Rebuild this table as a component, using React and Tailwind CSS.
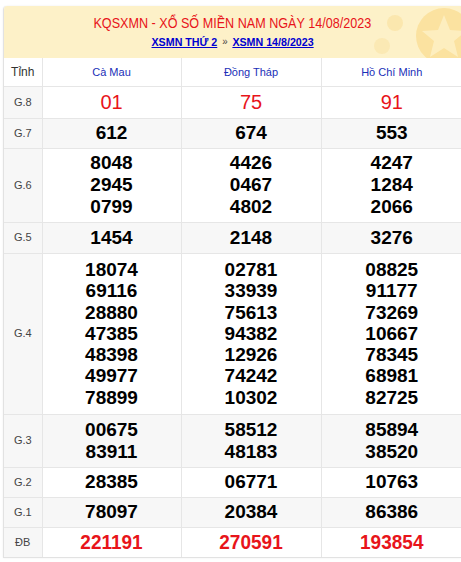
import React from "react";

const rows = [
  { label: "G.8", h: "h-[32px]", bg: "bg-white", red: "small", vals: [["01"], ["75"], ["91"]] },
  { label: "G.7", h: "h-[30px]", bg: "bg-[#f7f7f7]", vals: [["612"], ["674"], ["553"]] },
  { label: "G.6", h: "h-[74px]", bg: "bg-white", vals: [["8048", "2945", "0799"], ["4426", "0467", "4802"], ["4247", "1284", "2066"]] },
  { label: "G.5", h: "h-[31px]", bg: "bg-[#f7f7f7]", vals: [["1454"], ["2148"], ["3276"]] },
  {
    label: "G.4",
    h: "h-[161px]",
    bg: "bg-white",
    tight: true,
    vals: [
      ["18074", "69116", "28880", "47385", "48398", "49977", "78899"],
      ["02781", "33939", "75613", "94382", "12926", "74242", "10302"],
      ["08825", "91177", "73269", "10667", "78345", "68981", "82725"],
    ],
  },
  { label: "G.3", h: "h-[53px]", bg: "bg-[#f7f7f7]", vals: [["00675", "83911"], ["58512", "48183"], ["85894", "38520"]] },
  { label: "G.2", h: "h-[30px]", bg: "bg-white", vals: [["28385"], ["06771"], ["10763"]] },
  { label: "G.1", h: "h-[30px]", bg: "bg-[#f7f7f7]", vals: [["78097"], ["20384"], ["86386"]] },
  { label: "ĐB", h: "h-[30px]", bg: "bg-white", red: "big", vals: [["221191"], ["270591"], ["193854"]] },
];

function Cell({ lines, row }) {
  let cls = "text-[19px] font-bold text-black leading-[22px]";
  if (row.red === "small") cls = "text-[20px] font-normal text-[#e8141a] leading-[24px]";
  if (row.red === "big") cls = "text-[19px] font-bold text-[#e8141a] leading-[24px] scale-y-110";
  if (row.tight) cls = "text-[19px] font-bold text-black leading-[21.3px]";
  return (
    <td className="border-l border-[#e6e6e6] text-center align-middle">
      {lines.map((l) => (
        <div key={l} className={cls}>
          {l}
        </div>
      ))}
    </td>
  );
}

export default function App() {
  return (
    <div className="bg-white w-[461px] h-[562px] pl-[3px] pt-[6px] font-['Liberation_Sans',Arial,sans-serif] overflow-hidden">
      <div className="w-[458px] border-l border-b border-[#e2e2e2] rounded-tl-[4px] overflow-hidden shadow-[0_0_2px_rgba(0,0,0,0.08)]">
        <div className="relative h-[52px] bg-[#fdf1c8] overflow-hidden flex flex-col items-center">
          <svg className="absolute right-[-14px] top-[-4px]" width="110" height="64" viewBox="0 0 110 64">
            <circle cx="30" cy="21" r="8" fill="#fbe7ae" />
            <circle cx="17" cy="44" r="8" fill="#fbe9b4" />
            <circle cx="79" cy="34" r="28" fill="#fbe2a0" />
            <polygon
              points="79,13 85,28 101,29 89,39 93,55 79,46 65,55 69,39 57,29 73,28"
              fill="#fdeebf"
            />
          </svg>
          <div className="relative text-[#e8141a] text-[14px] leading-[18px] mt-[8px] whitespace-nowrap scale-x-90 scale-y-105">
            KQSXMN - XỔ SỐ MIỀN NAM NGÀY 14/08/2023
          </div>
          <div className="relative mt-[3px] text-[11px] font-bold leading-[14px] flex items-center gap-[5px] scale-x-[0.97]">
            <a className="text-[#0000d0] underline">XSMN THỨ 2</a>
            <span className="text-[#444] text-[10px] font-normal">»</span>
            <a className="text-[#0000d0] underline">XSMN 14/8/2023</a>
          </div>
        </div>
        <table className="w-[458px] border-collapse table-fixed">
          <colgroup>
            <col className="w-[38px]" />
            <col className="w-[139px]" />
            <col className="w-[140px]" />
            <col className="w-[141px]" />
          </colgroup>
          <tbody>
            <tr className="h-[28px] bg-white">
              <td className="text-center text-[12px] text-[#333]">Tỉnh</td>
              <td className="border-l border-[#e6e6e6] text-center text-[11px] text-[#1a2fb8]">Cà Mau</td>
              <td className="border-l border-[#e6e6e6] text-center text-[11px] text-[#1a2fb8]">Đồng Tháp</td>
              <td className="border-l border-[#e6e6e6] text-center text-[11px] text-[#1a2fb8]">Hồ Chí Minh</td>
            </tr>
            {rows.map((row) => (
              <tr key={row.label} className={`${row.h} ${row.bg} border-t border-[#e6e6e6]`}>
                <td className="text-center text-[11px] text-[#444] bg-[#f7f7f7]">{row.label}</td>
                {row.vals.map((v, i) => (
                  <Cell key={i} lines={v} row={row} />
                ))}
              </tr>
            ))}
          </tbody>
        </table>
      </div>
    </div>
  );
}
